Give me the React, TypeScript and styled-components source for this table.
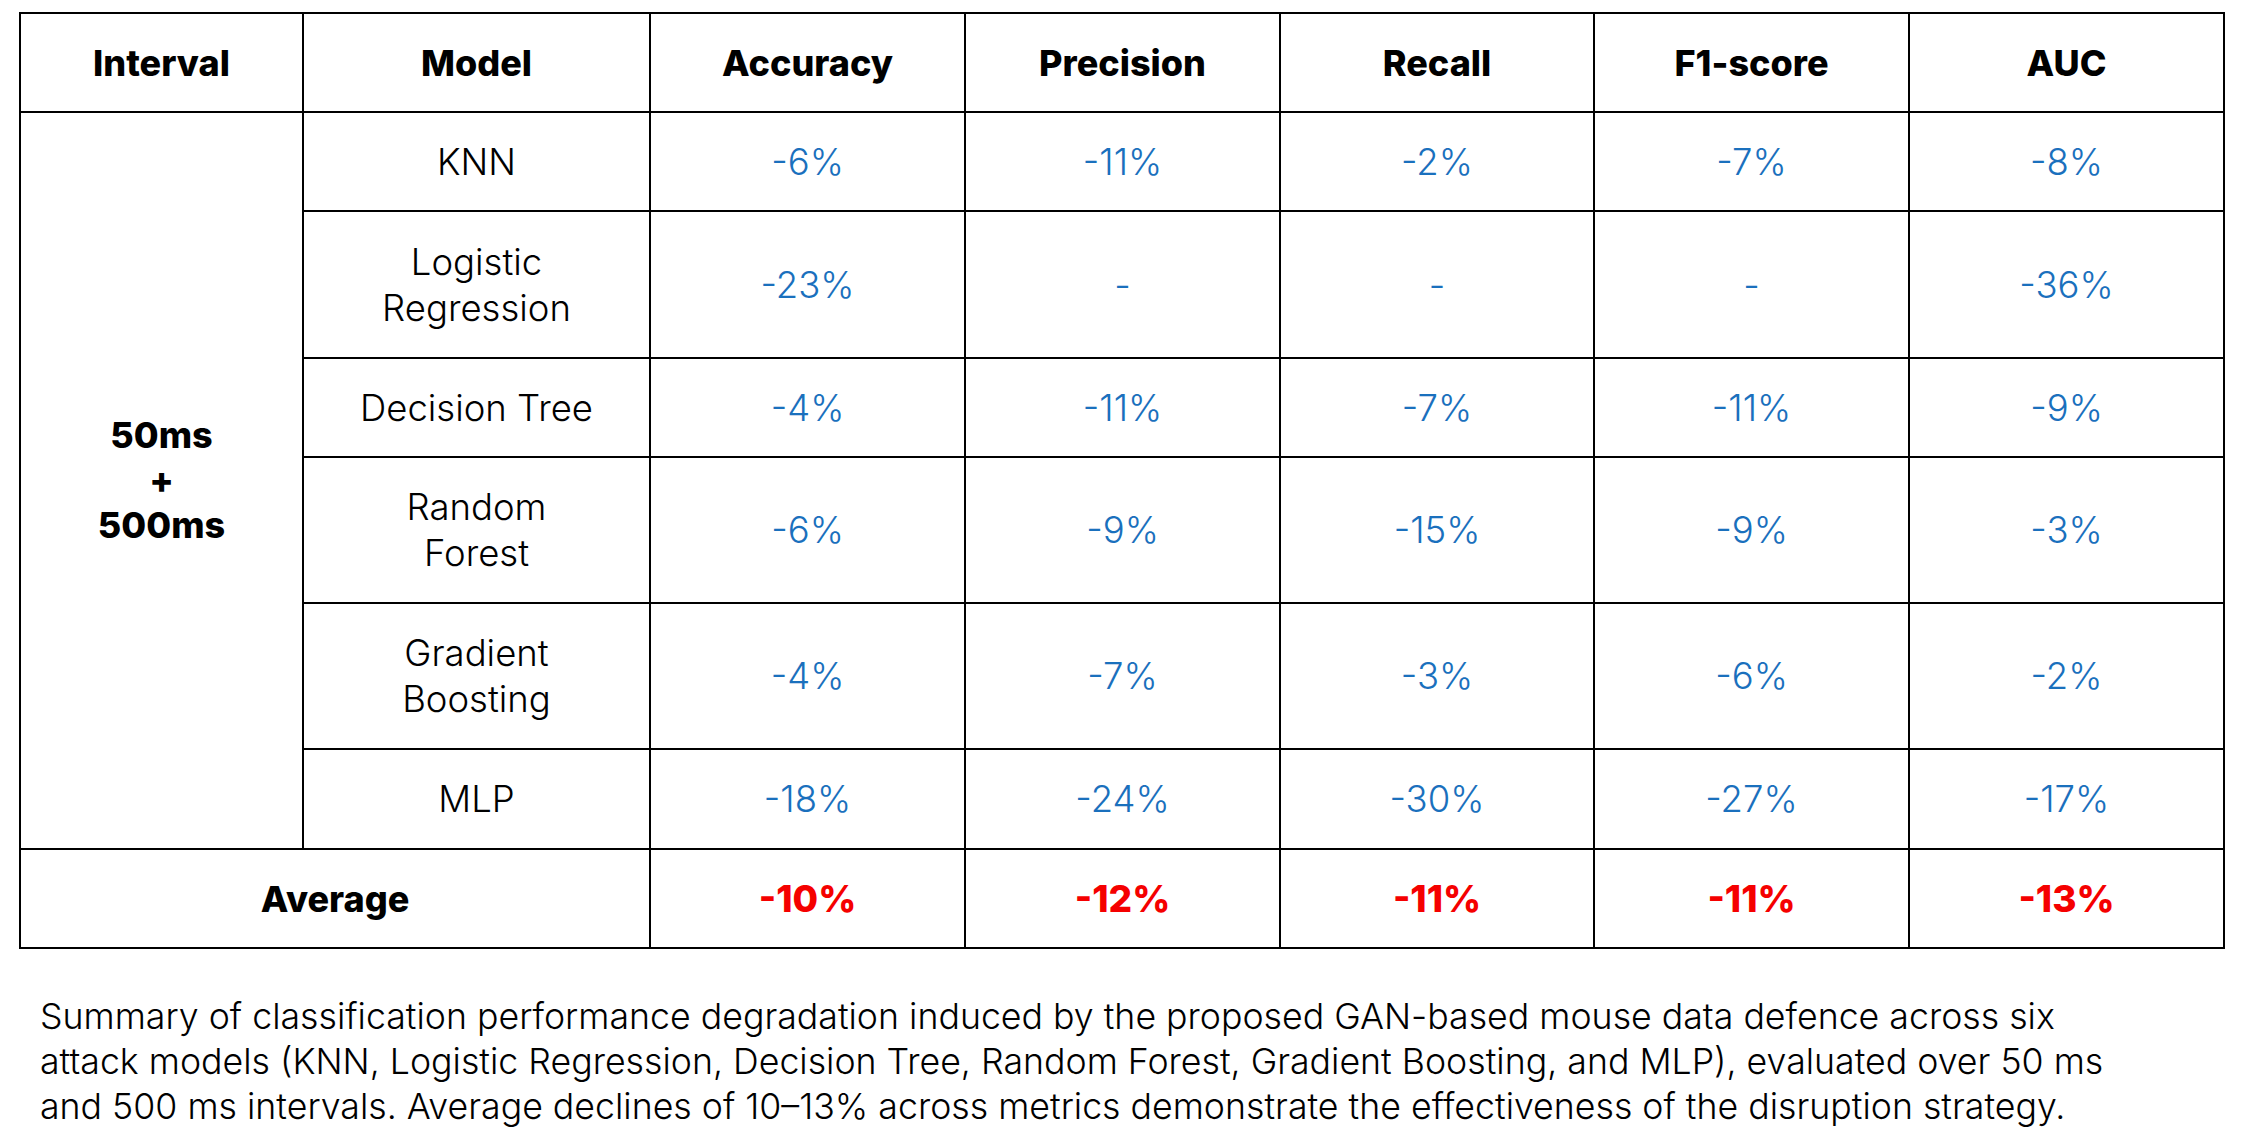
import React from 'react';
import styled, { createGlobalStyle } from 'styled-components';

const GlobalStyle = createGlobalStyle`
  html, body {
    margin: 0;
    padding: 0;
    background: #ffffff;
  }
  body {
    font-family: Inter, "Noto Sans", "Liberation Sans", sans-serif;
    color: #000;
  }
`;

const COLUMNS = [283, 347, 315, 315, 314, 315, 315];
const HEADERS = ['Interval', 'Model', 'Accuracy', 'Precision', 'Recall', 'F1-score', 'AUC'];

const ROWS = [
  { model: ['KNN'], values: ['-6%', '-11%', '-2%', '-7%', '-8%'], height: 99 },
  { model: ['Logistic', 'Regression'], values: ['-23%', '-', '-', '-', '-36%'], height: 147 },
  { model: ['Decision Tree'], values: ['-4%', '-11%', '-7%', '-11%', '-9%'], height: 99 },
  { model: ['Random', 'Forest'], values: ['-6%', '-9%', '-15%', '-9%', '-3%'], height: 146 },
  { model: ['Gradient', 'Boosting'], values: ['-4%', '-7%', '-3%', '-6%', '-2%'], height: 146 },
  { model: ['MLP'], values: ['-18%', '-24%', '-30%', '-27%', '-17%'], height: 100 },
];

const AVERAGES = ['-10%', '-12%', '-11%', '-11%', '-13%'];

function App() {
  return (
    <>
      <GlobalStyle />
      <Page>
        <Table>
          <colgroup>
            {COLUMNS.map((w, i) => (
              <col key={i} style={{ width: w }} />
            ))}
          </colgroup>
          <thead>
            <Row $height={99}>
              {HEADERS.map((h) => (
                <HeadCell key={h}>{h}</HeadCell>
              ))}
            </Row>
          </thead>
          <tbody>
            {ROWS.map((row, i) => (
              <Row key={i} $height={row.height}>
                {i === 0 && (
                  <IntervalCell rowSpan={ROWS.length}>
                    50ms
                    <br />+<br />
                    500ms
                  </IntervalCell>
                )}
                <ModelCell>
                  {row.model.map((line, j) => (
                    <React.Fragment key={j}>
                      {j > 0 && <br />}
                      {line}
                    </React.Fragment>
                  ))}
                </ModelCell>
                {row.values.map((v, j) => (
                  <ValueCell key={j}>{v}</ValueCell>
                ))}
              </Row>
            ))}
            <Row $height={99}>
              <AverageLabel colSpan={2}>Average</AverageLabel>
              {AVERAGES.map((v, j) => (
                <AverageCell key={j}>{v}</AverageCell>
              ))}
            </Row>
          </tbody>
        </Table>
        <Caption>
          Summary of classification performance degradation induced by the proposed GAN-based mouse data defence across six
          attack models (KNN, Logistic Regression, Decision Tree, Random Forest, Gradient Boosting, and MLP), evaluated over 50 ms
          and 500 ms intervals. Average declines of 10–13% across metrics demonstrate the effectiveness of the disruption strategy.
        </Caption>
      </Page>
    </>
  );
}
export default App;

const Page = styled.div`
  padding: 12px 0 0 19px;
  width: 2204px;
`;

const Table = styled.table`
  border-collapse: collapse;
  table-layout: fixed;
  width: 2204px;
`;

const Row = styled.tr<{ $height: number }>`
  height: ${(p) => p.$height}px;
`;

const Cell = styled.td`
  border: 2px solid #000;
  padding: 0;
  text-align: center;
  vertical-align: middle;
  font-size: 36.5px;
  line-height: 46px;
`;

const HeadCell = styled(Cell).attrs({ as: 'th' })`
  font-size: 36px;
  font-weight: 800;
  color: #000;
`;

const IntervalCell = styled(Cell)`
  font-size: 36px;
  font-weight: 800;
  line-height: 45px;
`;

const ModelCell = styled(Cell)`
  font-weight: 300;
  color: #000;
`;

const ValueCell = styled(Cell)`
  font-weight: 300;
  color: #1a70bd;
`;

const AverageLabel = styled(Cell)`
  font-size: 36px;
  font-weight: 800;
`;

const AverageCell = styled(Cell)`
  font-size: 37px;
  font-weight: 800;
  color: #f50000;
`;

const Caption = styled.p`
  margin: 45px 0 0;
  padding-left: 21px;
  width: 2108px;
  font-size: 35.7px;
  line-height: 45px;
  font-weight: 300;
  color: #000;
`;
